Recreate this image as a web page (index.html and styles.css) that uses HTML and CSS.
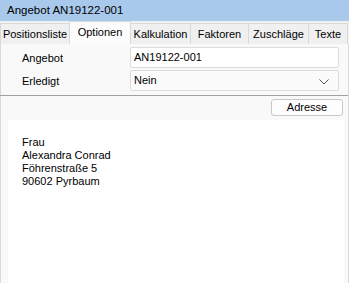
FILE: index.html
```html
<!DOCTYPE html>
<html>
<head>
<meta charset="utf-8">
<link rel="stylesheet" href="styles.css">
</head>
<body>
<div class="window">
  <div class="title">Angebot AN19122-001</div>
  <div class="tabs">
    <div class="tab t1">Positionsliste</div>
    <div class="tab t2 active">Optionen</div>
    <div class="tab t3">Kalkulation</div>
    <div class="tab t4">Faktoren</div>
    <div class="tab t5">Zuschläge</div>
    <div class="tab t6">Texte</div>
  </div>
  <div class="panel">
    <div class="form">
      <div class="row">
        <span class="label">Angebot</span>
        <div class="field">AN19122-001</div>
      </div>
      <div class="row">
        <span class="label">Erledigt</span>
        <div class="field select">Nein
          <svg class="chev" width="10" height="6" viewBox="0 0 10 6"><path d="M0.5 0.5 L5 5 L9.5 0.5" fill="none" stroke="#555" stroke-width="1"/></svg>
        </div>
      </div>
    </div>
    <div class="sep"></div>
    <div class="btnrow"><div class="btn">Adresse</div></div>
    <div class="address">
      <div>Frau</div>
      <div>Alexandra Conrad</div>
      <div>Föhrenstraße 5</div>
      <div>90602 Pyrbaum</div>
    </div>
  </div>
</div>
</body>
</html>
```
FILE: styles.css
```css
* { box-sizing: border-box; }
html, body { margin: 0; padding: 0; }
body {
  width: 349px; height: 283px; overflow: hidden;
  font-family: "Liberation Sans", Arial, sans-serif;
  font-size: 11px;
  color: #000;
  background: #f0f0f0;
}
.window { display: flex; flex-direction: column; height: 283px; }
.title {
  height: 21px;
  background: #a9c9ec;
  padding: 4px 0 0 7px;
  font-size: 11.5px;
}
.tabs {
  display: flex;
  height: 23px;
  background: #f0f0f0;
  padding-top: 2px;
  align-items: flex-end;
}
.tab {
  height: 21px;
  border: 1px solid #d9d9d9;
  border-bottom: none;
  border-left: none;
  padding-top: 4px;
  text-align: center;
  background: #f0f0f0;
  white-space: nowrap;
}
.t1 { width: 70px; border-left: 1px solid #d9d9d9; }
.t2 { width: 61px; }
.t3 { width: 60px; }
.t4 { width: 58px; }
.t5 { width: 60px; }
.t6 { width: 39px; }
.tab.active {
  height: 23px;
  margin-top: -2px;
  background: #fcfcfc;
  border-left: 1px solid #d9d9d9;
  margin-left: -1px;
  width: 62px;
  padding-top: 4px;
}
.panel {
  flex: 1;
  background: #f9f9f9;
  border-left: 1px solid #d9d9d9;
  border-right: 1px solid #d9d9d9;
  display: flex; flex-direction: column;
}
.form { padding: 3px 9px 0 21px; display: flex; flex-direction: column; gap: 2px; }
.row { display: flex; align-items: center; height: 21px; }
.label { width: 108px; }
.field {
  flex: 1; height: 21px;
  background: #fff;
  border: 1px solid #dcdcdc;
  border-radius: 2px;
  padding: 3px 0 0 3px;
  position: relative;
}
.select { background: #fbfbfb; }
.chev { position: absolute; right: 9px; top: 8px; }
.sep { height: 1px; background: #a0a0a0; margin: 4px 0 0 -1px; }
.btnrow { display: flex; justify-content: flex-end; padding: 3px 5px 0 0; }
.btn {
  width: 72px; height: 17px;
  border: 1px solid #c8c8c8;
  border-radius: 3px;
  background: #fdfdfd;
  text-align: center;
  line-height: 15px;
}
.address {
  flex: 1;
  margin: 4px 4px 0 7px;
  background: #fff;
  padding: 16px 0 0 14px;
  line-height: 13px;
}
```
